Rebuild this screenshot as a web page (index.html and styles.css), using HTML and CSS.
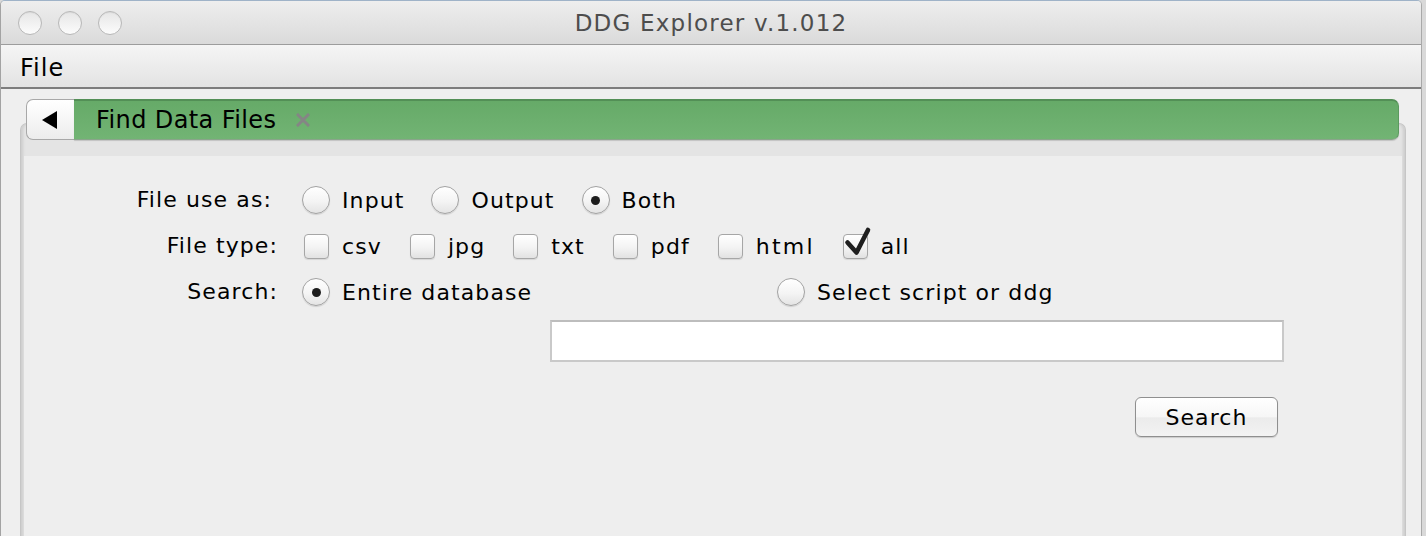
FILE: index.html
```html
<!DOCTYPE html>
<html>
<head>
<meta charset="utf-8">
<title>DDG Explorer v.1.012</title>
<link rel="stylesheet" href="styles.css">
</head>
<body>
<div class="window">
  <div class="titlebar">
    <div class="lights">
      <span class="light"></span><span class="light"></span><span class="light"></span>
    </div>
    <div class="title">DDG Explorer v.1.012</div>
  </div>
  <div class="menubar"><span class="menu">File</span></div>
  <div class="content">
    <div class="tabpane">
      <div class="tabs">
        <div class="back"><span class="tri"></span></div>
        <div class="tab"><span class="tab-label">Find Data Files</span><svg class="close" width="14" height="14" viewBox="0 0 14 14"><path d="M2 2 L12 12 M12 2 L2 12" stroke="#858585" stroke-width="3" stroke-linecap="square"/></svg></div>
      </div>
      <div class="panel">
        <div class="panel-body">
          <div class="form">
            <div class="label label-first">File use as:</div>
            <div class="controls">
              <div class="opt"><span class="radio"></span><span>Input</span></div>
              <div class="opt"><span class="radio"></span><span>Output</span></div>
              <div class="opt"><span class="radio on"></span><span>Both</span></div>
            </div>
            <div class="label">File type:</div>
            <div class="controls checks">
              <div class="opt"><span class="check"></span><span>csv</span></div>
              <div class="opt"><span class="check"></span><span>jpg</span></div>
              <div class="opt"><span class="check"></span><span>txt</span></div>
              <div class="opt"><span class="check"></span><span>pdf</span></div>
              <div class="opt"><span class="check"></span><span class="wide-text">html</span></div>
              <div class="opt"><span class="check on"><svg class="mark" width="26" height="26" viewBox="0 0 26 26"><path d="M4.5 8.5 L13.5 18.5 L25 -4" fill="none" stroke="#1f1f1f" stroke-width="4.6" stroke-linecap="round" stroke-linejoin="round"/></svg></span><span>all</span></div>
            </div>
            <div class="label">Search:</div>
            <div class="controls">
              <div class="opt opt-wide"><span class="radio on"></span><span>Entire database</span></div>
              <div class="opt"><span class="radio"></span><span>Select script or ddg</span></div>
            </div>
            <div class="spacer"></div>
            <div class="field-area">
              <div class="textfield"></div>
              <div class="btn-row"><button class="btn">Search</button></div>
            </div>
          </div>
        </div>
      </div>
    </div>
  </div>
</div>
</body>
</html>
```

FILE: styles.css
```css
* { box-sizing: border-box; }
html, body { margin: 0; padding: 0; }
body {
  width: 1426px;
  height: 536px;
  overflow: hidden;
  background: #d9d9d9;
  font-family: "DejaVu Sans", "Liberation Sans", sans-serif;
  color: #000;
}
.window {
  width: 1422px;
  height: 536px;
  border-left: 1px solid #a3a3a3;
  border-right: 1px solid #a9a9a9;
  border-top: 1px solid #9fb3c8;
  border-radius: 5px 5px 0 0;
  background: #eeeeee;
  overflow: hidden;
  display: flex;
  flex-direction: column;
}
.titlebar {
  height: 44px;
  flex: none;
  display: flex;
  align-items: center;
  background: linear-gradient(#eeeeee, #dadada);
  border-bottom: 1px solid #9c9c9c;
  position: relative;
}
.lights {
  display: flex;
  gap: 16px;
  padding-left: 17px;
}
.light {
  width: 24px;
  height: 24px;
  border-radius: 50%;
  border: 1px solid #b8b8b8;
  background: linear-gradient(#e6e6e6, #fcfcfc);
  box-shadow: inset 0 1px 1px rgba(0,0,0,0.06);
}
.title {
  position: absolute;
  left: 0;
  right: 0;
  top: 0;
  line-height: 44px;
  text-align: center;
  font-size: 23px;
  letter-spacing: 1.2px;
  color: #4d4d4d;
}
.menubar {
  height: 44px;
  flex: none;
  background: linear-gradient(#f5f5f5, #e3e3e3);
  border-bottom: 2px solid #7d7d7d;
  display: flex;
  align-items: center;
  padding-left: 19px;
}
.menu {
  font-size: 24px;
  letter-spacing: 1px;
  padding-top: 3px;
}
.content {
  flex: 1;
  background: #efefef;
  padding: 10px 0 0 19px;
}
.tabpane {
  width: 1386px;
}
.tabs {
  display: flex;
  height: 41px;
  padding: 0 7px 0 6px;
  position: relative;
  z-index: 1;
}
.back {
  width: 48px;
  height: 41px;
  border: 1px solid #a8a8a8;
  border-right: none;
  border-radius: 7px 0 0 7px;
  background: linear-gradient(#ffffff 0%, #f7f7f7 45%, #ececec 100%);
  display: flex;
  align-items: center;
  justify-content: center;
}
.tri {
  width: 0;
  height: 0;
  border-top: 9px solid transparent;
  border-bottom: 9px solid transparent;
  border-right: 15px solid #000;
  margin-right: 2px;
}
.tab {
  flex: 1;
  height: 41px;
  background: linear-gradient(#66aa68, #72b474);
  border-top: 2px solid #538f56;
  border-bottom: 1px solid #8aa58b;
  border-right: 1px solid #5c9a5f;
  border-radius: 0 7px 7px 0;
  display: flex;
  align-items: center;
  padding-left: 22px;
  box-shadow: 0 1px 1px rgba(0,0,0,0.15);
}
.tab-label {
  font-size: 24px;
  letter-spacing: 0.4px;
  color: #000;
}
.close {
  margin-left: 20px;
  margin-top: -1px;
  flex: none;
}
.panel {
  margin-top: -17px;
  height: 460px;
  border: 1px solid #c6c6c6;
  border-bottom: none;
  border-radius: 7px 7px 0 0;
  background: #e4e4e4;
  padding: 32px 3px 0 3px;
  box-shadow: inset 3px 0 3px -1px rgba(0,0,0,0.10), inset -3px 0 3px -1px rgba(0,0,0,0.10);
}
.panel-body {
  height: 100%;
  background: #eeeeee;
  padding-top: 21px;
}
.form {
  display: grid;
  grid-template-columns: 178px 1fr;
  column-gap: 24px;
  padding-left: 76px;
  font-size: 22px;
  letter-spacing: 1.1px;
}
.label {
  height: 46px;
  line-height: 46px;
  text-align: right;
  white-space: nowrap;
}
.label-first {
  padding-right: 6px;
}
.controls {
  height: 46px;
  display: flex;
  align-items: center;
  gap: 27px;
}
.checks {
  gap: 26px;
}
.opt {
  display: flex;
  align-items: center;
  gap: 12px;
  white-space: nowrap;
}
.checks .opt { gap: 13px; }
.wide-text { letter-spacing: 2.2px; }
.opt-wide {
  width: 448px;
}
.radio {
  width: 28px;
  height: 28px;
  border-radius: 50%;
  border: 1px solid #a2a2a2;
  background: linear-gradient(#ffffff, #f4f4f4 55%, #e4e4e4);
  box-shadow: 0 1px 1px rgba(0,0,0,0.12);
  display: flex;
  align-items: center;
  justify-content: center;
  flex: none;
}
.radio.on::after {
  content: "";
  width: 9px;
  height: 9px;
  border-radius: 50%;
  background: #1d1d1d;
}
.check {
  position: relative;
  width: 25px;
  height: 25px;
  border-radius: 4px;
  border: 1px solid #a6a6a6;
  background: linear-gradient(#ffffff, #f3f3f3 55%, #e2e2e2);
  box-shadow: 0 1px 1px rgba(0,0,0,0.10);
  margin-left: 2px;
  flex: none;
}
.mark {
  position: absolute;
  left: -1px;
  top: -1px;
  overflow: visible;
}
.spacer { height: 1px; }
.field-area {
  padding-left: 248px;
  margin-top: 5px;
  width: 982px;
}
.textfield {
  width: 734px;
  height: 42px;
  background: #ffffff;
  border: 2px solid #c9c9c9;
  border-top-color: #bdbdbd;
}
.btn-row {
  display: flex;
  justify-content: flex-end;
  padding-right: 6px;
  margin-top: 35px;
}
.btn {
  width: 143px;
  height: 40px;
  border: 1px solid #8f8f8f;
  border-radius: 6px;
  background: linear-gradient(#ffffff, #f6f6f6 50%, #ebebeb 52%, #f3f3f3);
  font-family: "DejaVu Sans", "Liberation Sans", sans-serif;
  font-size: 22px;
  letter-spacing: 1.1px;
  color: #000;
  padding: 0;
  box-shadow: 0 1px 1px rgba(0,0,0,0.15);
}
```
